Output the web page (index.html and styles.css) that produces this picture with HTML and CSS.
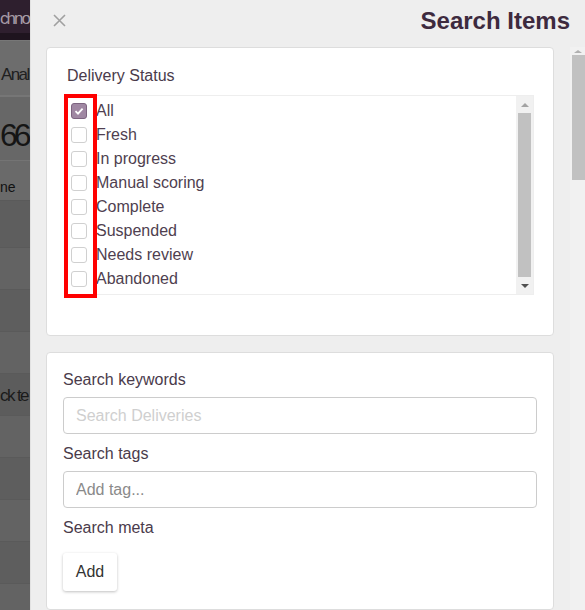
FILE: index.html
```html
<!DOCTYPE html>
<html lang="en">
<head>
    <meta charset="UTF-8">
    <meta name="viewport" content="width=device-width, initial-scale=1.0">
    <title>Search Items</title>
    <link rel="stylesheet" href="styles.css">
</head>
<body>
    <div class="page">
        <!-- Dimmed page behind the drawer -->
        <div class="backdrop">
            <div class="bd-nav"><span>chno</span></div>
            <div class="bd-tabs"><span>Anal</span></div>
            <div class="bd-total"><span>66</span></div>
            <div class="bd-head"><span>ne</span></div>
            <div class="bd-row dark first"></div>
            <div class="bd-row"></div>
            <div class="bd-row dark"></div>
            <div class="bd-row"></div>
            <div class="bd-row darker"><span>ck te</span></div>
            <div class="bd-row"></div>
            <div class="bd-row dark"></div>
            <div class="bd-row"></div>
            <div class="bd-row dark"></div>
            <div class="bd-row"></div>
        </div>

        <aside class="drawer">
            <header class="drawer-head">
                <button class="close-btn" type="button" aria-label="Close">
                    <svg width="13" height="13" viewBox="0 0 13 13">
                        <path d="M1 1 L12 12 M12 1 L1 12" stroke="#a0a0a0" stroke-width="1.6" fill="none"/>
                    </svg>
                </button>
                <h2 class="drawer-title">Search Items</h2>
            </header>

            <div class="drawer-body">
                <div class="drawer-content">
                    <section class="card status-card">
                        <h3 class="card-label">Delivery Status</h3>
                        <div class="listbox">
                            <ul class="status-list">
                                <li><span class="box checked"><svg width="10" height="10" viewBox="0 0 10 10"><path d="M1.5 5.2 L4 7.6 L8.6 2.6" stroke="#fff" stroke-width="1.8" fill="none"/></svg></span>All</li>
                                <li><span class="box"></span>Fresh</li>
                                <li><span class="box"></span>In progress</li>
                                <li><span class="box"></span>Manual scoring</li>
                                <li><span class="box"></span>Complete</li>
                                <li><span class="box"></span>Suspended</li>
                                <li><span class="box"></span>Needs review</li>
                                <li><span class="box"></span>Abandoned</li>
                            </ul>
                            <div class="list-scroll">
                                <span class="arrow up"></span>
                                <span class="thumb"></span>
                                <span class="arrow down"></span>
                            </div>
                            <!-- annotation around the checkbox column -->
                            <div class="highlight"></div>
                        </div>
                    </section>

                    <section class="card search-card">
                        <label class="field-label" for="keywords">Search keywords</label>
                        <input class="field light" id="keywords" type="text" placeholder="Search Deliveries">

                        <label class="field-label" for="tags">Search tags</label>
                        <input class="field" id="tags" type="text" placeholder="Add tag...">

                        <span class="field-label">Search meta</span>
                        <button class="add-btn" type="button">Add</button>
                    </section>
                </div>

                <div class="page-scroll">
                    <span class="arrow up small"></span>
                    <span class="thumb"></span>
                </div>
            </div>
        </aside>
    </div>
</body>
</html>
```

FILE: styles.css
```css
body {
    margin: 0;
    padding: 0;
    font-family: "Liberation Sans", Arial, sans-serif;
    overflow: hidden;
}

.page {
    display: flex;
    width: 585px;
    height: 610px;
    overflow: hidden;
}

/* ---- dimmed page on the left ---- */
.backdrop {
    width: 30px;
    flex: 0 0 30px;
    overflow: hidden;
    background-color: #606060;
}

.backdrop > div {
    display: flex;
    white-space: nowrap;
    box-sizing: border-box;
}

.bd-nav {
    height: 40px;
    border-bottom: 7px solid #1e141e;
    background-color: #2e1f2e;
    color: #a79ca7;
    font-size: 17px;
    letter-spacing: -2px;
    align-items: center;
    padding-top: 5px;
}

.bd-tabs {
    height: 57px;
    border-top: 1px solid #777;
    border-bottom: 2px solid #767676;
    background-color: #6d6d6d;
    color: #202020;
    font-size: 17px;
    letter-spacing: -1.6px;
    align-items: center;
    padding: 13px 0 0 1px;
}

.bd-total {
    height: 63px;
    background-color: #676767;
    color: #151515;
    font-size: 32px;
    letter-spacing: -4px;
    align-items: center;
    padding-top: 14px;
}

.bd-head {
    height: 40px;
    border-top: 1px solid #747474;
    background-color: #6a6a6a;
    color: #111;
    font-size: 14px;
    align-items: flex-end;
    padding-bottom: 5px;
}

.bd-row {
    height: 42px;
    border-top: 1px solid #5a5a5a;
    background-color: #636363;
    color: #1a1a1a;
    font-size: 17px;
    letter-spacing: -1.6px;
    align-items: center;
}

.bd-row.dark {
    background-color: #5e5e5e;
}

.bd-row.darker {
    background-color: #5c5c5c;
    padding-top: 2px;
}

.bd-row.first {
    height: 47px;
}

/* ---- drawer ---- */
.drawer {
    flex: 1;
    display: flex;
    flex-direction: column;
    background-color: #eeeeee;
    border-left: 1px solid #e2e2e2;
}

.drawer-head {
    height: 47px;
    flex: 0 0 47px;
    display: flex;
    align-items: center;
    justify-content: space-between;
    padding: 0 15px 0 22px;
    box-sizing: border-box;
}

.close-btn {
    background: none;
    border: none;
    padding: 0;
    margin-top: -6px;
    cursor: pointer;
    display: flex;
}

.drawer-title {
    margin: -6px 0 0 0;
    font-size: 24px;
    font-weight: bold;
    color: #3d2a3e;
}

.drawer-body {
    flex: 1;
    display: flex;
    min-height: 0;
}

.drawer-content {
    flex: 1;
    padding: 0 16px 0 15px;
    display: flex;
    flex-direction: column;
    gap: 16px;
}

.card {
    background-color: #fff;
    border: 1px solid #dddddd;
    border-radius: 4px;
}

.status-card {
    height: 289px;
    padding: 19px 19px 0 20px;
    box-sizing: border-box;
}

.card-label {
    margin: 0 0 10px 0;
    font-size: 16px;
    font-weight: normal;
    line-height: 18px;
    color: #4a3b4b;
}

.listbox {
    position: relative;
    display: flex;
    height: 200px;
    border: 1px solid #eeeeee;
    box-sizing: border-box;
}

.status-list {
    flex: 1;
    list-style: none;
    margin: 0;
    padding: 3px 0 0 3px;
}

.status-list li {
    display: flex;
    align-items: center;
    gap: 9px;
    height: 24px;
    font-size: 16px;
    color: #4f3f50;
}

.box {
    width: 16px;
    height: 16px;
    box-sizing: border-box;
    border: 1px solid #d0d0d0;
    border-radius: 3px;
    background-color: #fff;
    display: flex;
    align-items: center;
    justify-content: center;
}

.box.checked {
    background-color: #a088a3;
    border-color: #7d6480;
}

.list-scroll {
    width: 17px;
    flex: 0 0 17px;
    background-color: #f1f1f1;
    display: flex;
    flex-direction: column;
    align-items: center;
}

.list-scroll .arrow {
    height: 17px;
    flex: 0 0 17px;
}

.list-scroll .thumb {
    flex: 1;
    width: 13px;
    background-color: #c1c1c1;
}

.arrow {
    display: flex;
    align-items: center;
    justify-content: center;
}

.arrow::before {
    content: "";
    width: 0;
    height: 0;
    border-left: 4px solid transparent;
    border-right: 4px solid transparent;
}

.arrow.up::before {
    border-bottom: 4px solid #a3a3a3;
}

.arrow.down::before {
    border-top: 4px solid #505050;
}

.highlight {
    position: absolute;
    left: -4px;
    top: -2px;
    width: 33px;
    height: 204px;
    border: 4px solid #ff0000;
    box-sizing: border-box;
}

.search-card {
    flex: 1;
    padding: 18px 16px 0 16px;
    display: flex;
    flex-direction: column;
    align-items: flex-start;
}

.field-label {
    display: block;
    font-size: 16px;
    line-height: 18px;
    color: #4a3b4b;
    margin-bottom: 8px;
}

.field {
    width: 100%;
    height: 37px;
    box-sizing: border-box;
    border: 1px solid #cccccc;
    border-radius: 4px;
    padding: 0 12px;
    font-family: "Liberation Sans", Arial, sans-serif;
    font-size: 16px;
    margin-bottom: 11px;
}

.field::placeholder {
    color: #8a8a8a;
}

.field.light::placeholder {
    color: #cfcfcf;
}

.add-btn {
    margin-top: 8px;
    width: 54px;
    height: 38px;
    background-color: #fff;
    border: none;
    border-radius: 3px;
    box-shadow: 0 1px 3px rgba(0, 0, 0, 0.25);
    font-family: "Liberation Sans", Arial, sans-serif;
    font-size: 16px;
    color: #333;
    cursor: pointer;
}

.page-scroll {
    width: 15px;
    flex: 0 0 15px;
    background-color: #f1f1f1;
    display: flex;
    flex-direction: column;
    align-items: flex-end;
}

.page-scroll .arrow.small {
    height: 8px;
    width: 15px;
}

.page-scroll .arrow.small::before {
    border-left-width: 4px;
    border-right-width: 4px;
    border-bottom: 3px solid #b0b0b0;
}

.page-scroll .thumb {
    width: 13px;
    height: 125px;
    background-color: #c1c1c1;
}
```
